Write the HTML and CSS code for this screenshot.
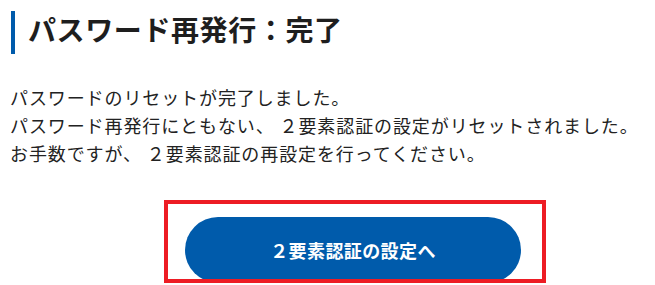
FILE: index.html
```html
<html>
<head>
    <meta charset="utf-8">
    <link rel="stylesheet" href="styles.css">
</head>
<body>
    <div class="page">
        <h1 class="page-title">パスワード再発行：完了</h1>

        <p class="message">
            パスワードのリセットが完了しました。<br>
            パスワード再発行にともない、 ２要素認証の設定がリセットされました。<br>
            お手数ですが、 ２要素認証の再設定を行ってください。
        </p>

        <div class="action">
            <div class="highlight">
                <button class="primary-button">２要素認証の設定へ</button>
            </div>
        </div>
    </div>
</body>
</html>
```

FILE: styles.css
```css
body {
    margin: 0;
    overflow: hidden;
    background: #fff;
    color: #222;
    font-family: "Noto Sans CJK JP", "Noto Sans", sans-serif;
}

.page {
    padding: 11px 10px 0;
}

.page-title {
    margin: 0 0 0 1px;
    padding: 0 0 6px 13px;
    border-left: 4px solid #005bab;
    font-size: 28px;
    line-height: 37px;
    font-weight: bold;
    letter-spacing: 0.6px;
    color: #1e1e1e;
}

.message {
    margin: 29px 0 0;
    font-size: 18px;
    line-height: 28px;
    letter-spacing: 0.9px;
    white-space: nowrap;
}

.action {
    display: flex;
    margin-top: 33px;
    padding-left: 154px;
}

/* red frame drawn over the button */
.highlight {
    position: relative;
    padding: 17px 25px 0 21px;
}

.highlight::after {
    content: "";
    position: absolute;
    top: 0;
    left: 0;
    right: 0;
    bottom: 0;
    border: 4px solid #ed1c24;
    pointer-events: none;
}

.primary-button {
    display: block;
    width: 336px;
    height: 66px;
    margin: 0;
    padding: 0;
    border: none;
    border-radius: 33px;
    background: #005bab;
    color: #fff;
    font-family: inherit;
    font-size: 18px;
    font-weight: bold;
    letter-spacing: 0.4px;
    cursor: pointer;
}
```
